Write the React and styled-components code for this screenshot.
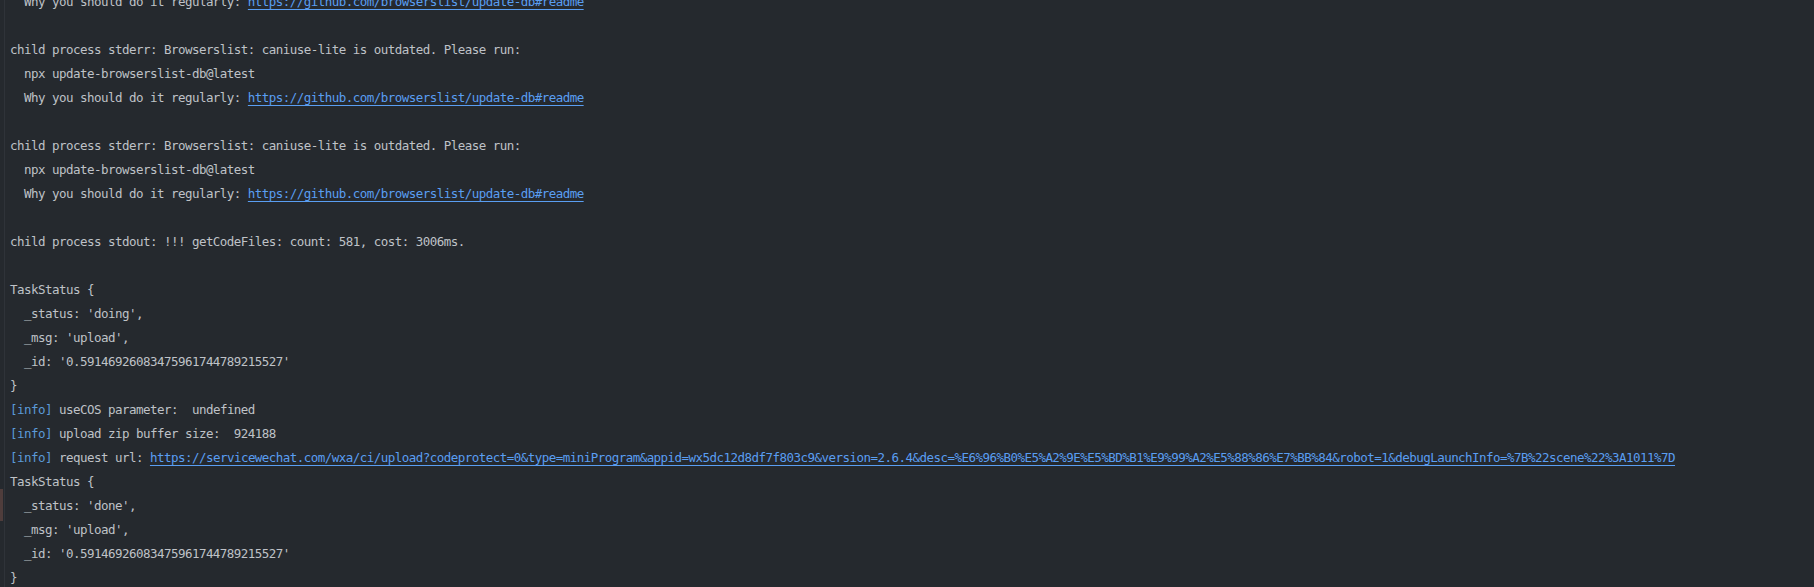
import React from "react";
import styled, { createGlobalStyle } from "styled-components";

const Global = createGlobalStyle`
  html, body { margin: 0; padding: 0; background: #25292e; }
  body { overflow: hidden; }
`;

const Console = styled.div`
  position: relative;
  height: 587px;
  width: 1814px;
  overflow: hidden;
  background: #25292e;
  display: flex;
  flex-direction: column;
  justify-content: flex-end;
  font-family: "DejaVu Sans Mono", "Liberation Mono", monospace;
  font-size: 12.5px;
  letter-spacing: -0.53px;
  color: #bfc2c7;
`;

const Log = styled.div`
  display: flex;
  flex-direction: column;
  flex: 0 0 auto;
  margin-bottom: -3px;
`;

const Gutter = styled.div`
  position: absolute;
  left: 4px;
  top: 0;
  bottom: 0;
  width: 1px;
  background: #2f3339;
`;

const Row = styled.div`
  position: relative;
  flex: 0 0 24px;
  height: 24px;
  line-height: 24px;
  padding-left: 10px;
  white-space: pre;
`;

const Marker = styled.span`
  position: absolute;
  left: 0;
  top: -5px;
  width: 3px;
  height: 32px;
  background: #4f3d3c;
`;

const Link = styled.span`
  color: #5a9ef2;
  text-decoration: underline;
  text-decoration-color: #5a9ef2;
  text-underline-offset: 3px;
`;

const Tag = styled.span`
  color: #5b9ad8;
`;

const README = "https://github.com/browserslist/update-db#readme";
const UPLOAD =
  "https://servicewechat.com/wxa/ci/upload?codeprotect=0&type=miniProgram&appid=wx5dc12d8df7f803c9&version=2.6.4&desc=%E6%96%B0%E5%A2%9E%E5%BD%B1%E9%99%A2%E5%88%86%E7%BB%84&robot=1&debugLaunchInfo=%7B%22scene%22%3A1011%7D";

const browserslist = () => [
  { t: "child process stderr: Browserslist: caniuse-lite is outdated. Please run:" },
  { t: "  npx update-browserslist-db@latest" },
  { t: "  Why you should do it regularly: ", link: README },
  { t: "" },
];

const taskStatus = (status, marker) => [
  { t: "TaskStatus {" },
  { t: "  _status: '" + status + "',", marker },
  { t: "  _msg: 'upload'," },
  { t: "  _id: '0.59146926083475961744789215527'" },
  { t: "}" },
];

const lines = [
  { t: "  Why you should do it regularly: ", link: README },
  { t: "" },
  ...browserslist(),
  ...browserslist(),
  { t: "child process stdout: !!! getCodeFiles: count: 581, cost: 3006ms." },
  { t: "" },
  ...taskStatus("doing"),
  { tag: "[info]", t: " useCOS parameter:  undefined" },
  { tag: "[info]", t: " upload zip buffer size:  924188" },
  { tag: "[info]", t: " request url: ", link: UPLOAD },
  ...taskStatus("done", true),
];

export default function App() {
  return (
    <>
      <Global />
      <Console>
        <Gutter />
        <Log>
          {lines.map((l, i) => (
            <Row key={i}>
              {l.marker && <Marker />}
              {l.tag && <Tag>{l.tag}</Tag>}
              {l.t}
              {l.link && <Link>{l.link}</Link>}
            </Row>
          ))}
        </Log>
      </Console>
    </>
  );
}
